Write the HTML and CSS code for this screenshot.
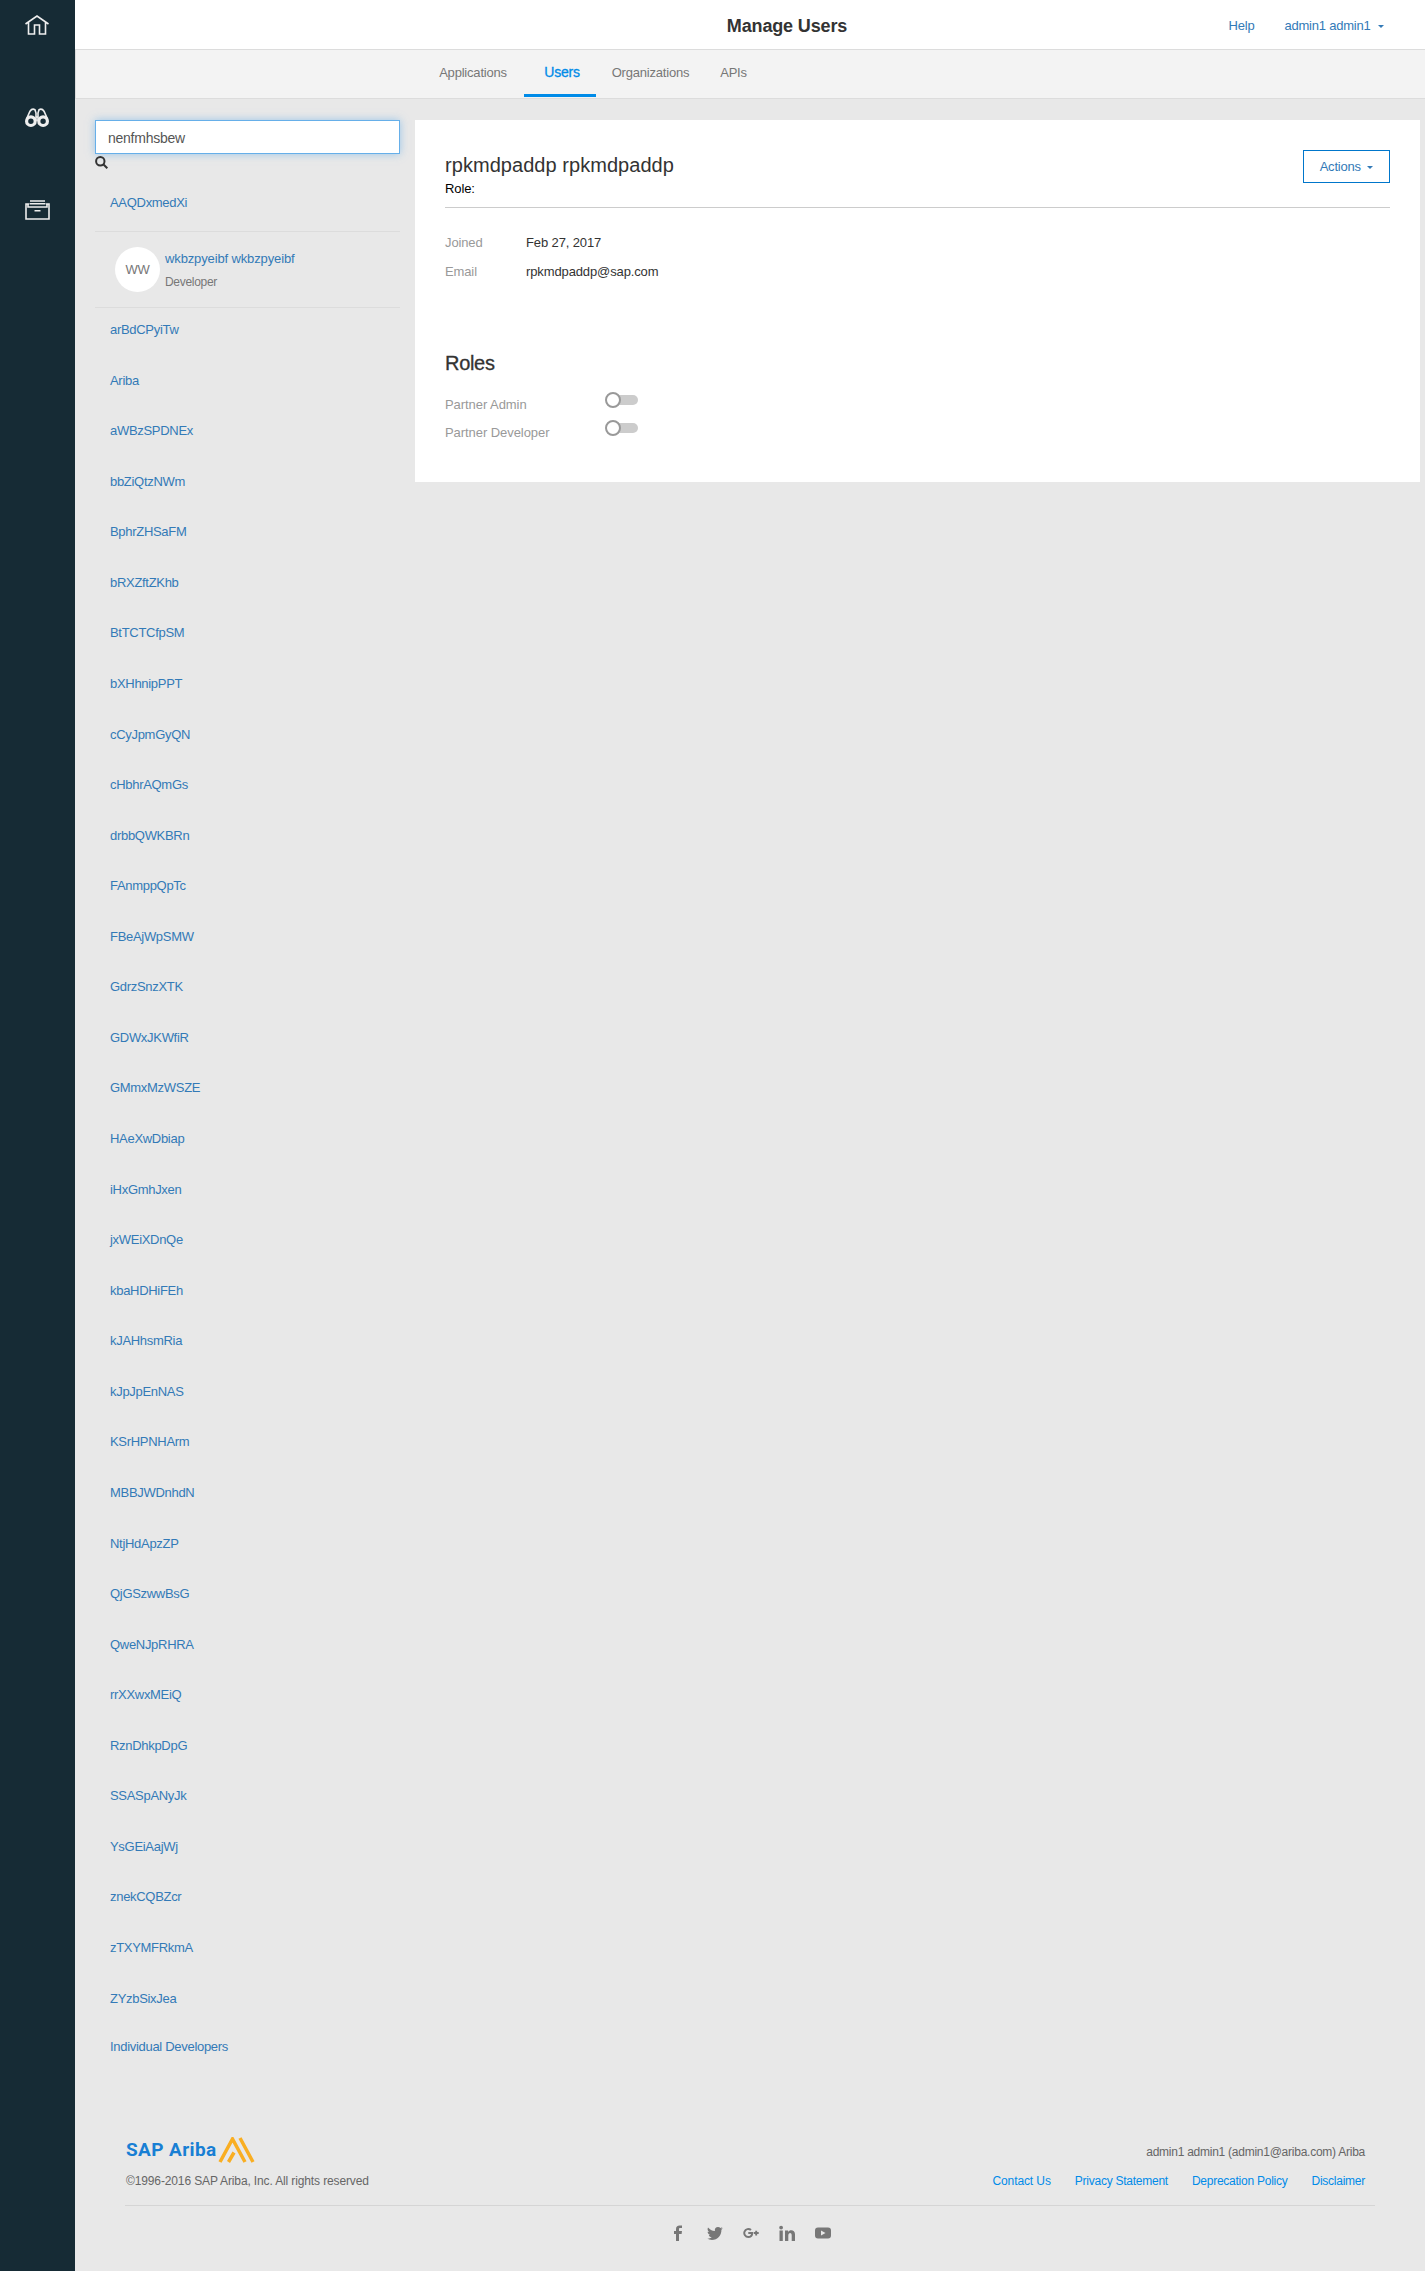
FILE: index.html
```html
<!DOCTYPE html>
<html lang="en">
<head>
<meta charset="utf-8">
<title>Manage Users</title>
<link rel="stylesheet" href="styles.css">
</head>
<body>
<div class="app">
  <aside class="rail">
    <a class="rail-link" aria-label="Home"><svg width="24" height="20" viewBox="0 0 24 20"><path d="M.5 9 12 1l11.500 8M3.500 7.500v11.500h6v-9h5v9h6V7.500"/></svg></a>
    <a class="rail-link" aria-label="Discover"><svg width="24" height="20" viewBox="0 0 24 20"><path d="M1.500 11 5 3.200Q7 .2 10 1.700L11 5v8M22.500 11 19 3.200Q17 .2 14 1.700L13 5v8M11 9h2"/><g class="lens"><circle cx="5.900" cy="13.200" r="4.300"/><circle cx="18.100" cy="13.200" r="4.300"/></g></svg></a>
    <a class="rail-link" aria-label="Inbox"><svg width="25" height="20" viewBox="0 0 25 20"><path d="M5 1h15M4.500 3.700h16M4 4H1v15h23V4h-3M3 4v3h19V4M9.500 10.700h6"/></svg></a>
  </aside>
  <div class="page">
    <header class="topbar">
      <span></span>
      <h1 class="title">Manage Users</h1>
      <nav class="account"><a class="help">Help</a><a class="menu">admin1 admin1<i class="caret"></i></a></nav>
    </header>
    <nav class="tabs">
      <a class="tab apps">Applications</a><a class="tab active">Users</a><a class="tab orgs">Organizations</a><a class="tab apis">APIs</a>
    </nav>
    <div class="content">
      <section class="sidebar">
        <input class="search" type="text" value="nenfmhsbew" aria-label="Search">
        <svg class="glass" width="13" height="13" viewBox="0 0 13 13"><circle cx="5.300" cy="5.300" r="4.200"/><path d="m8.300 8.300 4 4"/></svg>
        <div class="first"><a>AAQDxmedXi</a></div>
        <div class="person">
          <span class="avatar">WW</span>
          <div><a class="person-name">wkbzpyeibf wkbzpyeibf</a><div class="person-role">Developer</div></div>
        </div>
        <ul class="orglist">
          <li>arBdCPyiTw</li><li>Ariba</li><li>aWBzSPDNEx</li><li>bbZiQtzNWm</li><li>BphrZHSaFM</li><li>bRXZftZKhb</li><li>BtTCTCfpSM</li><li>bXHhnipPPT</li><li>cCyJpmGyQN</li><li>cHbhrAQmGs</li><li>drbbQWKBRn</li><li>FAnmppQpTc</li><li>FBeAjWpSMW</li><li>GdrzSnzXTK</li><li>GDWxJKWfiR</li><li>GMmxMzWSZE</li><li>HAeXwDbiap</li><li>iHxGmhJxen</li><li>jxWEiXDnQe</li><li>kbaHDHiFEh</li><li>kJAHhsmRia</li><li>kJpJpEnNAS</li><li>KSrHPNHArm</li><li>MBBJWDnhdN</li><li>NtjHdApzZP</li><li>QjGSzwwBsG</li><li>QweNJpRHRA</li><li>rrXXwxMEiQ</li><li>RznDhkpDpG</li><li>SSASpANyJk</li><li>YsGEiAajWj</li><li>znekCQBZcr</li><li>zTXYMFRkmA</li><li>ZYzbSixJea</li><li class="individual">Individual Developers</li>
        </ul>
      </section>
      <main class="card">
        <div class="card-head">
          <div><h2 class="name">rpkmdpaddp rpkmdpaddp</h2><div class="role">Role:</div></div>
          <button class="actions">Actions<i class="caret"></i></button>
        </div>
        <dl class="facts"><dt>Joined</dt><dd>Feb 27, 2017</dd><dt>Email</dt><dd>rpkmdpaddp@sap.com</dd></dl>
        <h2 class="roles">Roles</h2>
        <div class="toggle-row"><span>Partner Admin</span><i class="switch"></i></div>
        <div class="toggle-row"><span>Partner Developer</span><i class="switch"></i></div>
      </main>
    </div>
    <footer class="footer">
      <div class="footer-top">
        <div>
          <div class="logo"><span class="wordmark">SAP Ariba</span><svg width="38" height="26" viewBox="0 0 38 26"><path d="M2 25 14.500 2 27 25M10.500 25l5.500-9.500M22 1l13 24"/></svg></div>
          <div class="copyright">©1996-2016 SAP Ariba, Inc. All rights reserved</div>
        </div>
        <div class="footer-right">
          <div class="whoami">admin1 admin1 (admin1@ariba.com) Ariba</div>
          <div class="links"><a class="contact">Contact Us</a><a>Privacy Statement</a><a>Deprecation Policy</a><a>Disclaimer</a></div>
        </div>
      </div>
      <div class="social">
        <svg width="16" height="16" viewBox="0 0 16 16"><path d="M5 16V9H3V6h2V4.200C5 1.600 6.300.4 8.600.4H11V3H9.500C8.200 3 8 3.500 8 4.300V6h3l-.4 3H8v7z"/></svg>
        <svg width="16" height="16" viewBox="0 0 16 16"><path d="M16 3.200 14.400 4.700C14.600 10.200 10.500 15 5 15 3.200 15 1.500 14.500 0 13.600c1.700.2 3.400-.3 4.800-1.400-1.400 0-2.600-1-3-2.300h1.400C1.700 9.500.6 8.200.6 6.700l1.500.3C.6 6 .2 4 1 2.500c1.700 2 4 3.300 6.900 3.500C7.400 3.600 9 2 11 2c1 0 1.800.4 2.400 1l2-.8L14.200 4z"/></svg>
        <svg width="16" height="16" viewBox="0 0 17 16"><path d="M5.600 7v2h3c-.3 1.300-1.300 2.200-3 2.200A3.200 3.200 0 1 1 7.700 5.600l1.500-1.500A5.300 5.300 0 1 0 5.600 13.300C9 13.300 11.200 11 10.800 7zM13 5.700V7h-1.500v2H13v1.700h2V9h1.700V7H15V5.700z"/></svg>
        <svg width="16" height="16" viewBox="0 0 16 16"><path d="M.5 5.500h3.300V16H.5zM2.100.7a1.900 1.900 0 1 1 0 3.800 1.900 1.900 0 0 1 0-3.800M6 5.500h3.100V7c1.300-2.500 6.900-2.700 6.900 2.300V16h-3.300v-5.500c0-3.500-3.400-3-3.400 0V16H6z"/></svg>
        <svg width="16" height="16" viewBox="0 0 16 16"><path fill-rule="evenodd" d="M3 2.500h10q3 0 3 3v5q0 3-3 3H3q-3 0-3-3v-5q0-3 3-3M6 5.500v5L10.500 8z"/></svg>
      </div>
    </footer>
  </div>
</div>
</body>
</html>
```
FILE: styles.css
```css
*, *::before, *::after { box-sizing: border-box; }
body { margin: 0; font: 13px/18.57px "Liberation Sans", Arial, sans-serif; color: #333; background: #e8e8e8; letter-spacing: -.3px; }
h1, h2, dl, dd, ul { margin: 0; padding: 0; font-weight: normal; }
.app { display: flex; height: 2271px; }
.rail { width: 75px; background: #162b35; display: flex; flex-direction: column; align-items: center; gap: 72.500px; padding: 15px 1px 0 0; }
.rail-link { height: 20px; }
.rail svg { display: block; fill: none; stroke: #eee; stroke-width: 1.6; }
.rail .lens { stroke-width: 3.2; }
.page { flex: 1; display: flex; flex-direction: column; }
.topbar { height: 50px; background: #fff; border-bottom: 1px solid #dcdcdc; display: grid; grid-template-columns: 1fr auto 1fr; align-items: center; padding: 3px 41px 0 115px; }
.title { font-size: 18px; font-weight: bold; letter-spacing: -.15px; }
.account { display: flex; justify-content: flex-end; gap: 30px; color: #337ab7; letter-spacing: -.22px; }
.caret { display: inline-block; border: 3.500px solid transparent; border-top-width: 3px; border-top-color: currentColor; border-bottom: 0; margin-left: 7.500px; vertical-align: 2px; }
.tabs { height: 49px; background: #f3f3f3; border: 1px solid #dcdcdc; border-width: 0 0 1px 1px; display: flex; padding: 0 0 1px 346px; color: #777; letter-spacing: -.2px; }
.tab { display: flex; align-items: center; justify-content: center; padding-bottom: 1px; width: 102px; }
.tab.active { width: 72px; color: #008be8; border-bottom: 3px solid #008be8; padding: 2px 0 1px 4px; font-size: 14px; -webkit-text-stroke: .3px; }
.tab.orgs { width: 109px; }
.tab.apis { width: 57px; }
.content { display: flex; padding: 21px 5px 0 20px; gap: 15px; }
.sidebar { width: 305px; }
.search { display: block; width: 305px; height: 34px; border: 1px solid #66afe9; box-shadow: 0 0 8px rgba(102,175,233,.6); padding: 2px 12px 0; font: 14px "Liberation Sans", Arial, sans-serif; letter-spacing: -.25px; color: #555; outline: 0; }
.glass { display: block; margin-top: 2px; fill: none; stroke: #333; stroke-width: 2; }
.sidebar a, .orglist { color: #337ab7; }
.first { height: 63px; padding: 25px 15px 0; border-bottom: 1px solid #dcdcdc; }
.person { height: 76px; display: flex; gap: 5px; padding: 15px 20px 0; border-bottom: 1px solid #dcdcdc; }
.avatar { width: 45px; height: 45px; border-radius: 50%; background: #fff; color: #777; text-align: center; line-height: 45px; }
.person-name { display: block; padding-top: 3px; letter-spacing: -.13px; }
.person-role { color: #777; font-size: 12px; padding-top: 4px; }
.orglist { list-style: none; padding: 13px 15px 0; }
.orglist li { height: 50.57px; }
.orglist .individual { margin-top: -2px; }
.card { flex: 1; height: 362px; background: #fff; padding: 30px; letter-spacing: -.12px; }
.card-head { height: 58px; border-bottom: 1px solid #ccc; display: flex; justify-content: space-between; align-items: flex-start; }
.name { font-size: 20px; line-height: 30px; letter-spacing: .05px; }
.role { color: #000; line-height: 18px; }
.actions { width: 87px; height: 33px; border: 1px solid #0076cb; background: #fff; font: inherit; letter-spacing: -.2px; color: #337ab7; padding: 1px 0 0; }
.actions .caret { margin-left: 6.500px; }
.facts { display: grid; grid-template-columns: 81px 1fr; grid-auto-rows: 29px; padding-top: 26px; height: 144px; }
.facts dt, .toggle-row { color: #999; }
.roles { font-size: 20px; height: 44px; line-height: 22px; letter-spacing: -.3px; -webkit-text-stroke: .3px; }
.toggle-row { display: flex; height: 28px; }
.toggle-row span { width: 160px; letter-spacing: -.06px; }
.switch { position: relative; width: 33px; height: 16px; margin-top: -4px; }
.switch::before { content: ""; position: absolute; left: 8px; top: 3px; width: 25px; height: 10px; border-radius: 5px; background: #ccc; }
.switch::after { content: ""; position: absolute; left: 0; top: 0; width: 16px; height: 16px; border-radius: 50%; border: 2px solid #999; background: #fff; }
.footer { margin-top: auto; height: 134px; padding: 0 50px; }
.footer-top { height: 69px; border-bottom: 1px solid #d5d5d5; display: flex; justify-content: space-between; padding: 0 10px 0 1px; font-size: 12px; }
.logo { display: flex; height: 35px; }
.logo svg { fill: none; stroke: #f9ae22; stroke-width: 3.500; }
.wordmark { font: bold 19px/26px Roboto, sans-serif; letter-spacing: .4px; color: #187fd4; width: 92px; white-space: nowrap; }
.copyright, .whoami { color: #666; }
.copyright { letter-spacing: -.13px; }
.footer-right { text-align: right; padding-top: 6px; letter-spacing: -.25px; }
.links { display: flex; justify-content: flex-end; gap: 24px; padding-top: 10px; color: #008be8; }
.contact { letter-spacing: -.1px; }
.social { display: flex; justify-content: center; gap: 20px; padding: 19px 0 0 1px; }
.social svg { fill: #777; }
```
